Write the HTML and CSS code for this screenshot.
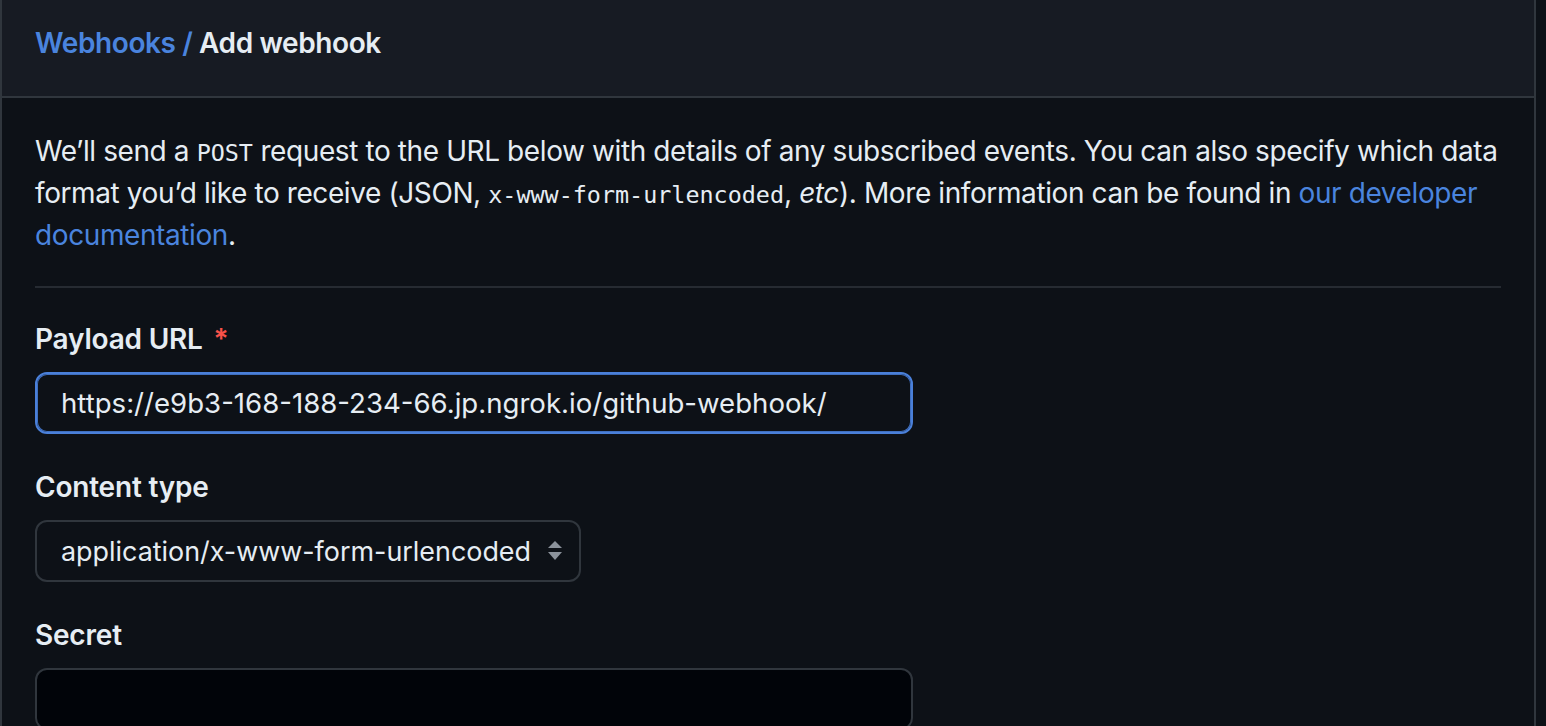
FILE: index.html
```html
<!DOCTYPE html>
<html lang="en">
<head>
<meta charset="utf-8">
<title>Add webhook</title>
<link rel="stylesheet" href="styles.css">
</head>
<body>
<div class="page">
  <section class="box">
    <header class="box-header">
      <h2 class="box-title"><a href="#" class="crumb">Webhooks</a> <span class="sep">/</span> Add webhook</h2>
    </header>
    <div class="box-body">
      <p class="note">We’ll send a <code>POST</code> request to the URL below with details of any subscribed events. You can also specify which data format you’d like to receive (JSON, <code>x-www-form-urlencoded</code>, <em>etc</em>). More information can be found in <a href="#" class="link">our developer documentation</a>.</p>
      <hr class="divider">
      <div class="form-group">
        <label class="label" for="url">Payload URL <span class="req">*</span></label>
        <input id="url" class="input input-focus" type="text" value="https://e9b3-168-188-234-66.jp.ngrok.io/github-webhook/">
      </div>
      <div class="form-group">
        <label class="label" for="ctype">Content type</label>
        <div class="select">
          <span class="select-value">application/x-www-form-urlencoded</span>
          <svg class="select-arrows" width="16" height="22" viewBox="0 0 16 22"><path d="M8 1 L15 8 L1 8 Z" fill="#8b929b"/><path d="M1 12 L15 12 L8 20 Z" fill="#8b929b"/></svg>
        </div>
      </div>
      <div class="form-group">
        <label class="label" for="secret">Secret</label>
        <input id="secret" class="input input-dark" type="text" value="">
      </div>
    </div>
  </section>
</div>
</body>
</html>
```
FILE: styles.css
```css
html, body {
  margin: 0;
  padding: 0;
  background: #0d1117;
  height: 100%;
  overflow: hidden;
}
body {
  font-family: Inter, "Noto Sans", "Liberation Sans", sans-serif;
  color: #e6edf3;
}
.page {
  width: 1536px;
}
.box {
  border-left: 2px solid #30363d;
  border-right: 2px solid #30363d;
  height: 726px;
  overflow: hidden;
}
.box-header {
  box-sizing: border-box;
  background: #171b23;
  height: 98px;
  border-bottom: 2px solid #30363d;
  display: flex;
  align-items: center;
  padding: 0 33px 10px 33px;
}
.box-title {
  margin: 0;
  font-size: 28px;
  font-weight: 600;
  letter-spacing: -0.4px;
  color: #e6edf3;
}
.crumb, .sep {
  color: #4a84de;
  text-decoration: none;
}
.box-body {
  padding: 32px 33px 0 33px;
}
.note {
  margin: 0 -8px 0 0;
  font-size: 28px;
  line-height: 42px;
  letter-spacing: -0.4px;
  color: #e6edf3;
}
.note code {
  font-family: "DejaVu Sans Mono", "Liberation Mono", monospace;
  font-size: 23.4px;
  letter-spacing: 0;
  line-height: 1;
}
.link {
  color: #4a84de;
  text-decoration: none;
}
.divider {
  border: 0;
  height: 2px;
  background: #262b32;
  margin: 30px 0 33px 0;
}
.form-group {
  display: flex;
  flex-direction: column;
  align-items: flex-start;
  margin-bottom: 35px;
}
.label {
  font-size: 28px;
  font-weight: 600;
  line-height: 36px;
  margin-bottom: 15px;
  letter-spacing: -0.2px;
}
.req {
  color: #f85149;
  margin-left: 4px;
}
.input {
  box-sizing: border-box;
  width: 878px;
  height: 62px;
  border-radius: 12px;
  font-family: Inter, "Noto Sans", "Liberation Sans", sans-serif;
  font-size: 27.6px;
  color: #e6edf3;
  padding: 0 24px;
  outline: none;
  margin: 0;
}
.input-focus {
  background: #0d1117;
  border: 2px solid #4a80da;
  box-shadow: inset 0 0 0 1px #3f6fbf;
}
.input-dark {
  background: #010409;
  border: 2px solid #30363d;
}
.select {
  box-sizing: border-box;
  width: 546px;
  height: 62px;
  border: 2px solid #30363d;
  border-radius: 12px;
  background: #0d1117;
  display: flex;
  align-items: center;
  justify-content: space-between;
  padding: 0 16px 0 24px;
}
.select-value {
  font-size: 26.9px;
  color: #e6edf3;
}
.select-arrows {
  display: block;
}
```
